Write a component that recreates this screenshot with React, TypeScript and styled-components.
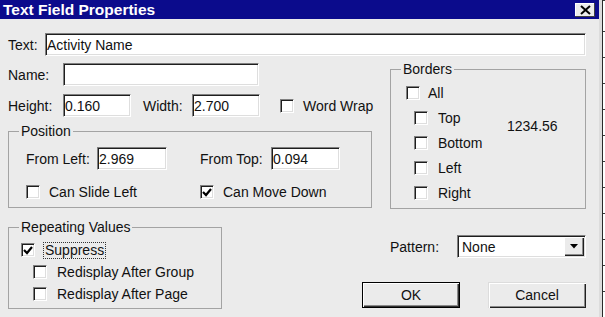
import React from "react";
import styled, { createGlobalStyle } from "styled-components";

const Global = createGlobalStyle`
  html, body { margin: 0; padding: 0; background: #ffffff; }
  body {
    font-family: "Liberation Sans", Arial, sans-serif;
    font-size: 14px;
    color: #111111;
  }
  #root { width: 605px; height: 317px; overflow: hidden; }
`;

const Screen = styled.div`
  display: flex;
  width: 605px;
  height: 317px;
  overflow: hidden;
`;

const Dialog = styled.div`
  width: 599px;
  flex: none;
  background: #ebebeb;
  display: flex;
  flex-direction: column;
`;

const Behind = styled.div`
  flex: 1;
  display: flex;
`;

const BehindGap = styled.div`
  width: 3px;
  background: #dcdcdc;
`;

const BehindGrid = styled.div`
  flex: 1;
  border-left: 1px solid #2a2a2a;
  background-color: #ffffff;
  background-image: repeating-linear-gradient(
    to bottom,
    transparent 0px,
    transparent 25px,
    #3a3a3a 25px,
    #3a3a3a 26px
  );
  background-position: 0 6px;
`;

const TitleBar = styled.div`
  height: 19px;
  background: #0b0b8c;
  display: flex;
  align-items: center;
  justify-content: space-between;
  padding: 0 4px 0 3px;
`;

const Title = styled.span`
  color: #ffffff;
  font-weight: bold;
  font-size: 15.5px;
  line-height: 19px;
`;

const CloseBtn = styled.div`
  width: 20px;
  height: 14px;
  background: #ececec;
  display: flex;
  align-items: center;
  justify-content: center;
  box-shadow: inset -1px -1px #404040, inset 1px 1px #ffffff;
`;

const Body = styled.div`
  padding: 14px 13px 0 8px;
  display: flex;
  flex-direction: column;
`;

const Row = styled.div<{ $mt?: number }>`
  display: flex;
  align-items: center;
  height: 23px;
  margin-top: ${(p) => p.$mt ?? 0}px;
`;

const Label = styled.span<{ $w: number; $ml?: number }>`
  width: ${(p) => p.$w}px;
  margin-left: ${(p) => p.$ml ?? 0}px;
  flex: none;
  white-space: nowrap;
  line-height: 16px;
`;

const Field = styled.input<{ $w?: number }>`
  box-sizing: border-box;
  height: 23px;
  ${(p) => (p.$w ? `width: ${p.$w}px; flex: none;` : "flex: 1; min-width: 0;")}
  margin: 0;
  padding: 0 0 0 1px;
  font-family: "Liberation Sans", Arial, sans-serif;
  font-size: 14px;
  color: #111111;
  background: #ffffff;
  border-top: 1px solid #808080;
  border-left: 1px solid #808080;
  border-bottom: 1px solid #ffffff;
  border-right: 1px solid #ffffff;
  box-shadow: inset 1px 1px #1e1e1e, inset -1px -1px #dedede;
  outline: none;
`;

const Mid = styled.div`
  display: flex;
  align-items: flex-start;
  gap: 17px;
  margin-top: 5px;
`;

const LeftCol = styled.div`
  width: 365px;
  flex: none;
  display: flex;
  flex-direction: column;
  padding-top: 2px;
`;

const Group = styled.fieldset<{ $w: number; $mt?: number }>`
  margin: ${(p) => p.$mt ?? 0}px 0 0 0;
  padding: 0;
  min-width: 0;
  box-sizing: border-box;
  width: ${(p) => p.$w}px;
  flex: none;
  border: 1px solid #a3a3a3;
`;

const Legend = styled.legend`
  padding: 0 2px;
  margin-left: 10px;
  font-size: 14px;
  line-height: 16px;
`;

const GroupBody = styled.div<{ $pad: string }>`
  padding: ${(p) => p.$pad};
  display: flex;
  flex-direction: column;
`;

const CheckRow = styled.div<{ $mt?: number; $ml?: number }>`
  display: flex;
  align-items: center;
  height: 18px;
  margin-top: ${(p) => p.$mt ?? 0}px;
  margin-left: ${(p) => p.$ml ?? 0}px;
`;

const CheckItem = styled.div<{ $w?: number; $gap?: number }>`
  display: flex;
  align-items: center;
  gap: ${(p) => p.$gap ?? 9}px;
  height: 18px;
  ${(p) => (p.$w ? `width: ${p.$w}px; flex: none;` : "")}
  white-space: nowrap;
`;

const Box = styled.span`
  box-sizing: border-box;
  width: 14px;
  height: 14px;
  flex: none;
  background: #ffffff;
  border-top: 1px solid #808080;
  border-left: 1px solid #808080;
  border-bottom: 1px solid #ffffff;
  border-right: 1px solid #ffffff;
  box-shadow: inset 1px 1px #1e1e1e, inset -1px -1px #dedede;
  display: flex;
  align-items: center;
  justify-content: center;
`;

const Focus = styled.span`
  border: 1px dotted #333333;
  padding: 0 1px;
  line-height: 15px;
`;

const Indent = styled.div`
  display: flex;
  margin-left: 8px;
  margin-top: 7px;
`;

const StackCol = styled.div<{ $gap: number; $w?: number }>`
  display: flex;
  flex-direction: column;
  gap: ${(p) => p.$gap}px;
  ${(p) => (p.$w ? `width: ${p.$w}px; flex: none;` : "")}
`;

const Value = styled.span`
  margin-top: 9px;
  line-height: 16px;
`;

const Bottom = styled.div`
  display: flex;
  align-items: flex-start;
  margin-top: 10px;
`;

const RightCol = styled.div`
  flex: 1;
  display: flex;
  flex-direction: column;
  align-items: flex-end;
`;

const Combo = styled.div`
  box-sizing: border-box;
  width: 129px;
  height: 23px;
  background: #ffffff;
  border-top: 1px solid #808080;
  border-left: 1px solid #808080;
  border-bottom: 1px solid #ffffff;
  border-right: 1px solid #ffffff;
  box-shadow: inset 1px 1px #1e1e1e, inset -1px -1px #dedede;
  display: flex;
  align-items: center;
  padding: 2px 1px 2px 4px;
`;

const ComboText = styled.span`
  flex: 1;
  line-height: 16px;
`;

const DropBtn = styled.span`
  box-sizing: border-box;
  width: 20px;
  height: 19px;
  background: #ebebeb;
  box-shadow: inset 1px 1px #ffffff, inset -1px -1px #202020, inset -2px -2px #8a8a8a;
  display: flex;
  align-items: center;
  justify-content: center;
`;

const Buttons = styled.div`
  display: flex;
  gap: 28px;
  margin-top: 24px;
`;

const Button = styled.button<{ $default?: boolean }>`
  box-sizing: border-box;
  width: 98px;
  height: 26px;
  margin: 0;
  padding: 0;
  font-family: "Liberation Sans", Arial, sans-serif;
  font-size: 14px;
  color: #111111;
  background: #ebebeb;
  border: ${(p) => (p.$default ? "1px solid #000000" : "none")};
  box-shadow: ${(p) =>
    p.$default
      ? "inset 1px 1px #ffffff, inset -1px -1px #303030, inset -2px -2px #8a8a8a"
      : "inset 1px 1px #dcdcdc, inset 2px 2px #ffffff, inset -1px -1px #202020, inset -2px -2px #8a8a8a"};
`;

const Check = ({ checked }: { checked?: boolean }) => (
  <Box>
    {checked && (
      <svg width="10" height="9" viewBox="0 0 10 9">
        <polyline points="1,4 4,7 9,1" fill="none" stroke="#000" strokeWidth="2.2" />
      </svg>
    )}
  </Box>
);

export default function App() {
  return (
    <Screen>
      <Global />
      <Dialog>
        <TitleBar>
          <Title>Text Field Properties</Title>
          <CloseBtn>
            <svg width="11" height="10" viewBox="0 0 11 10">
              <line x1="1" y1="1" x2="10" y2="9" stroke="#000" strokeWidth="2" />
              <line x1="10" y1="1" x2="1" y2="9" stroke="#000" strokeWidth="2" />
            </svg>
          </CloseBtn>
        </TitleBar>
        <Body>
          <Row>
            <Label $w={37}>Text:</Label>
            <Field readOnly value="Activity Name" />
          </Row>
          <Mid>
            <LeftCol>
              <Row>
                <Label $w={55}>Name:</Label>
                <Field readOnly value="" $w={196} />
              </Row>
              <Row $mt={8}>
                <Label $w={55}>Height:</Label>
                <Field readOnly value="0.160" $w={68} />
                <Label $w={49} $ml={12}>Width:</Label>
                <Field readOnly value="2.700" $w={68} />
                <CheckRow $ml={20}>
                  <CheckItem>
                    <Check />
                    <span>Word Wrap</span>
                  </CheckItem>
                </CheckRow>
              </Row>
              <Group $w={364} $mt={6}>
                <Legend>Position</Legend>
                <GroupBody $pad="8px 0 6px 17px">
                  <Row>
                    <Label $w={71}>From Left:</Label>
                    <Field readOnly value="2.969" $w={70} />
                    <Label $w={71} $ml={33}>From Top:</Label>
                    <Field readOnly value="0.094" $w={69} />
                  </Row>
                  <CheckRow $mt={13}>
                    <CheckItem $w={174}>
                      <Check />
                      <span>Can Slide Left</span>
                    </CheckItem>
                    <CheckItem>
                      <Check checked />
                      <span>Can Move Down</span>
                    </CheckItem>
                  </CheckRow>
                </GroupBody>
              </Group>
            </LeftCol>
            <Group $w={196}>
              <Legend>Borders</Legend>
              <GroupBody $pad="7px 0 6px 15px">
                <CheckItem $gap={8}>
                  <Check />
                  <span>All</span>
                </CheckItem>
                <Indent>
                  <StackCol $gap={7} $w={93}>
                    <CheckItem $gap={10}>
                      <Check />
                      <span>Top</span>
                    </CheckItem>
                    <CheckItem $gap={10}>
                      <Check />
                      <span>Bottom</span>
                    </CheckItem>
                    <CheckItem $gap={10}>
                      <Check />
                      <span>Left</span>
                    </CheckItem>
                    <CheckItem $gap={10}>
                      <Check />
                      <span>Right</span>
                    </CheckItem>
                  </StackCol>
                  <Value>1234.56</Value>
                </Indent>
              </GroupBody>
            </Group>
          </Mid>
          <Bottom>
            <Group $w={214}>
              <Legend>Repeating Values</Legend>
              <GroupBody $pad="6px 0 5px 12px">
                <StackCol $gap={4}>
                  <CheckItem $gap={8}>
                    <Check checked />
                    <Focus>Suppress</Focus>
                  </CheckItem>
                  <CheckRow $ml={12}>
                    <CheckItem $gap={10}>
                      <Check />
                      <span>Redisplay After Group</span>
                    </CheckItem>
                  </CheckRow>
                  <CheckRow $ml={12}>
                    <CheckItem $gap={10}>
                      <Check />
                      <span>Redisplay After Page</span>
                    </CheckItem>
                  </CheckRow>
                </StackCol>
              </GroupBody>
            </Group>
            <RightCol>
              <Row $mt={16}>
                <Label $w={67}>Pattern:</Label>
                <Combo>
                  <ComboText>None</ComboText>
                  <DropBtn>
                    <svg width="8" height="5" viewBox="0 0 8 5">
                      <polygon points="0,0 8,0 4,4.5" fill="#000" />
                    </svg>
                  </DropBtn>
                </Combo>
              </Row>
              <Buttons>
                <Button $default>OK</Button>
                <Button>Cancel</Button>
              </Buttons>
            </RightCol>
          </Bottom>
        </Body>
      </Dialog>
      <Behind>
        <BehindGap />
        <BehindGrid />
      </Behind>
    </Screen>
  );
}
